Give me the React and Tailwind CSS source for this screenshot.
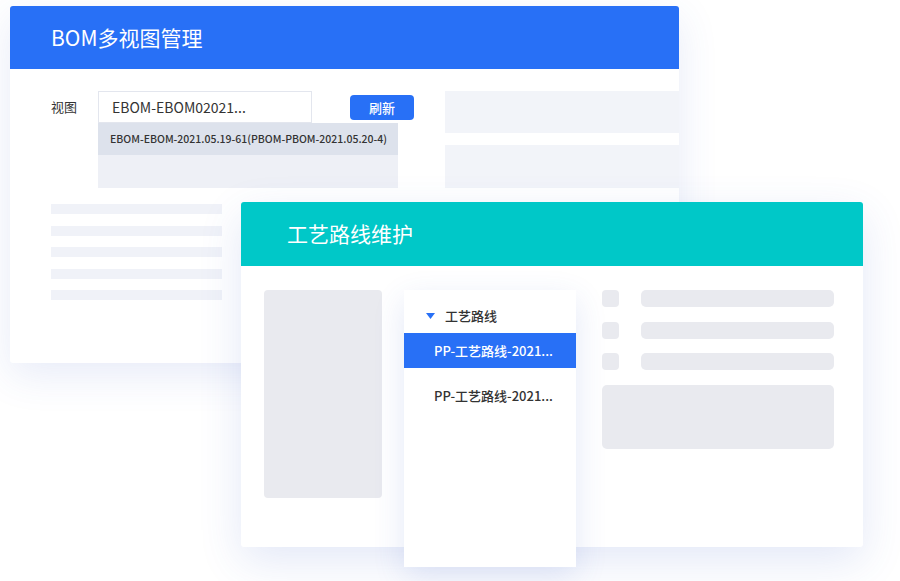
import React from 'react';

const font = { fontFamily: '"Noto Sans CJK SC", "Noto Sans", sans-serif' };

function BomCard() {
  return (
    <div className="absolute left-[10px] top-[6px] w-[669px] h-[357px] bg-white rounded-[3px] shadow-[0_12px_40px_rgba(60,90,200,0.12)]">
      <div className="h-[63px] bg-[#2870f6] rounded-t-[3px] flex items-center pl-[41px] text-white text-[21px]">
        BOM多视图管理
      </div>

      <div className="flex pt-[22px] pl-[41px]">
        {/* view picker + skeleton lines */}
        <div className="w-[394px] flex flex-col">
          <div className="flex items-start">
            <div className="w-[47px] pt-[6px] text-[13px] text-[#333]">视图</div>
            <div className="w-[214px] h-[32px] border border-[#e3e6ee] bg-white flex items-center pl-[13px] text-[14px] text-[#333]">
              EBOM-EBOM02021...
            </div>
            <button className="ml-[38px] mt-[4px] w-[64px] h-[25px] rounded-[4px] bg-[#2870f6] text-white text-[13px] font-medium flex items-center justify-center">
              刷新
            </button>
          </div>
          <div className="ml-[47px] w-[300px]">
            <div className="h-[32px] bg-[#dde2ec] flex items-center pl-[12px] text-[10.5px] font-medium text-[#333] whitespace-nowrap">
              EBOM-EBOM-2021.05.19-61(PBOM-PBOM-2021.05.20-4)
            </div>
            <div className="h-[33px] bg-[#eef0f6]" />
          </div>
          <div className="mt-[16px] flex flex-col gap-[11.5px]">
            <div className="w-[171px] h-[10px] bg-[#f0f2f8]" />
            <div className="w-[171px] h-[10px] bg-[#f0f2f8]" />
            <div className="w-[171px] h-[10px] bg-[#f0f2f8]" />
            <div className="w-[171px] h-[10px] bg-[#f0f2f8]" />
            <div className="w-[171px] h-[10px] bg-[#f0f2f8]" />
          </div>
        </div>

        <div className="flex-1 flex flex-col gap-[12px]">
          <div className="h-[42px] bg-[#f2f4f9]" />
          <div className="h-[43px] bg-[#f2f4f9]" />
        </div>
      </div>
    </div>
  );
}

function RouteTree() {
  return (
    <div className="w-[172px] h-[277px] shrink-0 bg-white shadow-[0_10px_30px_rgba(60,90,200,0.14)]">
      <div className="h-[43px] flex items-center pl-[22px] pt-[9px] text-[13px] font-medium text-[#333]">
        <svg width="9" height="6" viewBox="0 0 9 6" className="mr-[10px]">
          <path d="M0 0 L9 0 L4.5 6 Z" fill="#2870f6" />
        </svg>
        工艺路线
      </div>
      <div className="h-[35px] bg-[#2870f6] flex items-center pl-[30px] text-[13px] font-medium text-white">
        PP-工艺路线-2021...
      </div>
      <div className="h-[56px] flex items-center pl-[30px] text-[13px] font-medium text-[#333]">
        PP-工艺路线-2021...
      </div>
    </div>
  );
}

function RouteCard() {
  return (
    <div className="absolute left-[241px] top-[202px] w-[622px] h-[345px] bg-white rounded-[3px] shadow-[0_14px_44px_rgba(60,90,200,0.14)]">
      <div className="h-[64px] bg-[#00c8c8] rounded-t-[3px] flex items-center pl-[46px] text-white text-[21px]">
        工艺路线维护
      </div>

      <div className="flex items-start pt-[24px] pl-[23px]">
        <div className="w-[118px] h-[208px] rounded-[4px] bg-[#e9eaef]" />
        <div className="ml-[22px]">
          <RouteTree />
        </div>
        <div className="ml-[26px] w-[232px] flex flex-col">
          <div className="flex flex-col gap-[14.5px]">
            {[0, 1, 2].map((i) => (
              <div key={i} className="flex items-center">
                <div className="w-[17px] h-[17px] rounded-[4px] bg-[#e9eaef]" />
                <div className="ml-[22px] w-[193px] h-[17px] rounded-[5px] bg-[#e9eaef]" />
              </div>
            ))}
          </div>
          <div className="mt-[15px] h-[64px] rounded-[5px] bg-[#e9eaef]" />
        </div>
      </div>
    </div>
  );
}

export default function App() {
  return (
    <div className="relative w-[900px] h-[581px] bg-white overflow-hidden" style={font}>
      <BomCard />
      <RouteCard />
    </div>
  );
}
